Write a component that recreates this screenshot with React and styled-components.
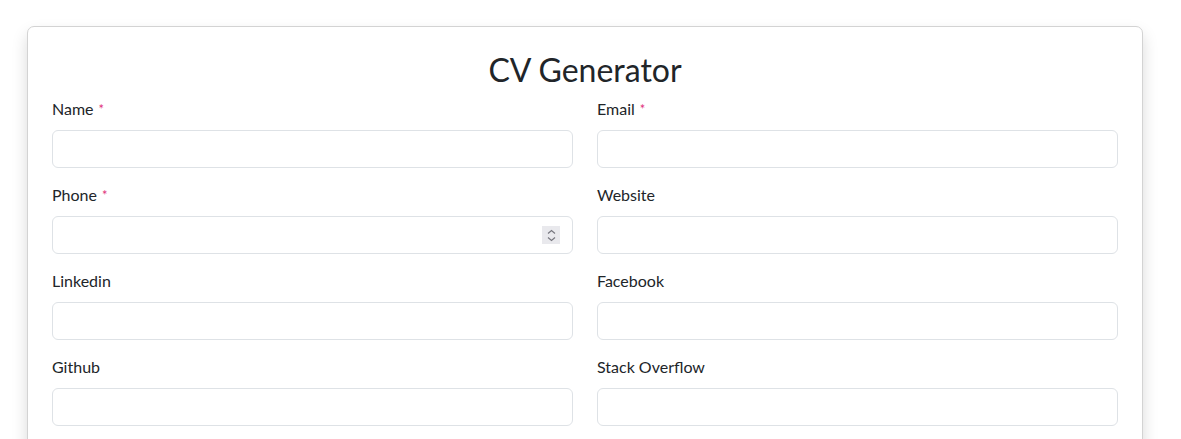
import React from "react";
import styled, { createGlobalStyle } from "styled-components";

const GlobalStyle = createGlobalStyle`
  * {
    box-sizing: border-box;
  }
  body {
    margin: 0;
    background: #ffffff;
    color: #212529;
    font-family: "Lato", "Open Sans", sans-serif;
  }
`;

const fields = [
  { label: "Name", required: true, type: "text" },
  { label: "Email", required: true, type: "email" },
  { label: "Phone", required: true, type: "number" },
  { label: "Website", type: "text" },
  { label: "Linkedin", type: "text" },
  { label: "Facebook", type: "text" },
  { label: "Github", type: "text" },
  { label: "Stack Overflow", type: "text" },
];

function Spinner() {
  return (
    <SpinBox>
      <svg width="9" height="13" viewBox="0 0 9 13" fill="none">
        <path d="M1 4.5 L4.5 1.5 L8 4.5" stroke="#77777f" strokeWidth="1.2" />
        <path d="M1 8.5 L4.5 11.5 L8 8.5" stroke="#77777f" strokeWidth="1.2" />
      </svg>
    </SpinBox>
  );
}

function App() {
  return (
    <>
      <GlobalStyle />
      <Page>
        <Card>
          <Title>CV Generator</Title>
          <Form>
            {fields.map((f) => (
              <Group key={f.label}>
                <Label>
                  {f.label}
                  {f.required && <Star>*</Star>}
                </Label>
                <Field>
                  <Input type={f.type} />
                  {f.type === "number" && <Spinner />}
                </Field>
              </Group>
            ))}
          </Form>
        </Card>
      </Page>
    </>
  );
}

export default App;

const Page = styled.div`
  padding: 26px 0 0 27px;
`;

const Card = styled.div`
  width: 1116px;
  background: #fff;
  border: 1px solid #d3d3d3;
  border-radius: 7px;
  box-shadow: 0 8px 16px rgba(0, 0, 0, 0.15);
  padding: 24px 24px 8px;
`;

const Title = styled.h2`
  margin: 0 0 8px;
  text-align: center;
  font-size: 32px;
  font-weight: 400;
  line-height: 38px;
  color: #212529;
`;

const Form = styled.form`
  display: grid;
  grid-template-columns: 1fr 1fr;
  column-gap: 24px;
`;

const Group = styled.div`
  margin-bottom: 15px;
`;

const Label = styled.label`
  display: block;
  font-size: 16px;
  line-height: 24px;
  margin-bottom: 9px;
  color: #212529;
`;

const Star = styled.span`
  color: #e0307a;
  font-size: 13px;
  margin-left: 5px;
  vertical-align: top;
`;

const Field = styled.div`
  position: relative;
`;

const Input = styled.input`
  display: block;
  width: 100%;
  height: 38px;
  padding: 6px 12px;
  font-size: 16px;
  font-family: inherit;
  border: 1px solid #dee2e6;
  border-radius: 6px;
  outline: none;
  background: #fff;
  -moz-appearance: textfield;

  &::-webkit-inner-spin-button,
  &::-webkit-outer-spin-button {
    -webkit-appearance: none;
    margin: 0;
  }
`;

const SpinBox = styled.div`
  position: absolute;
  right: 13px;
  top: 10px;
  width: 18px;
  height: 18px;
  background: #e9e9ed;
  display: flex;
  align-items: center;
  justify-content: center;
  pointer-events: none;
`;
